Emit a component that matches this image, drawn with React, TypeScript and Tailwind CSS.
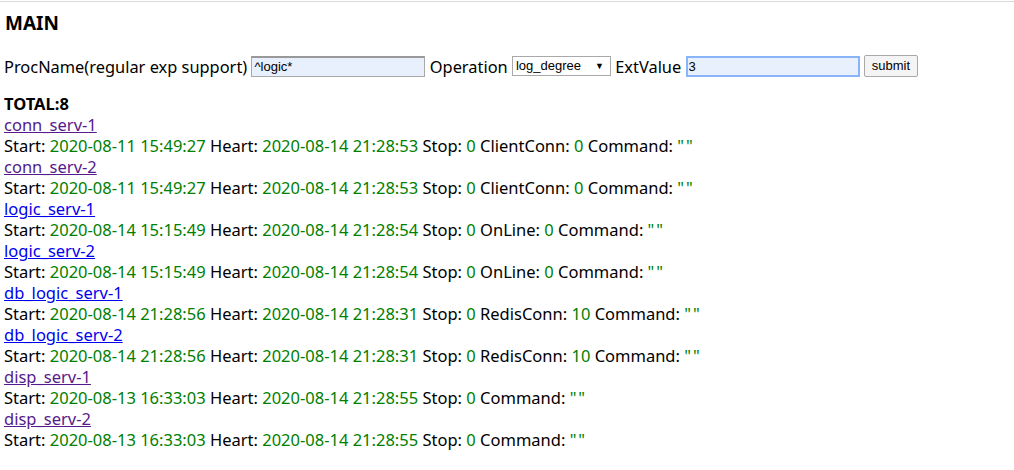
const G = "text-[#008000]";

interface Proc {
  name: string;
  visited: boolean;
  start: string;
  heart: string;
  stop: string;
  extra?: [string, string];
}

const procs: Proc[] = [
  { name: "conn_serv-1", visited: true, start: "2020-08-11 15:49:27", heart: "2020-08-14 21:28:53", stop: "0", extra: ["ClientConn", "0"] },
  { name: "conn_serv-2", visited: true, start: "2020-08-11 15:49:27", heart: "2020-08-14 21:28:53", stop: "0", extra: ["ClientConn", "0"] },
  { name: "logic_serv-1", visited: false, start: "2020-08-14 15:15:49", heart: "2020-08-14 21:28:54", stop: "0", extra: ["OnLine", "0"] },
  { name: "logic_serv-2", visited: false, start: "2020-08-14 15:15:49", heart: "2020-08-14 21:28:54", stop: "0", extra: ["OnLine", "0"] },
  { name: "db_logic_serv-1", visited: false, start: "2020-08-14 21:28:56", heart: "2020-08-14 21:28:31", stop: "0", extra: ["RedisConn", "10"] },
  { name: "db_logic_serv-2", visited: false, start: "2020-08-14 21:28:56", heart: "2020-08-14 21:28:31", stop: "0", extra: ["RedisConn", "10"] },
  { name: "disp_serv-1", visited: true, start: "2020-08-13 16:33:03", heart: "2020-08-14 21:28:55", stop: "0" },
  { name: "disp_serv-2", visited: true, start: "2020-08-13 16:33:03", heart: "2020-08-14 21:28:55", stop: "0" },
];

export default function App() {
  return (
    <div
      className="w-[1014px] h-[470px] bg-white text-black border-t border-[#d9d9d9] mt-px px-[4px] text-[16.5px] leading-[21px]"
      style={{ fontFamily: '"Noto Sans", "Open Sans", sans-serif' }}
    >
      <h1 className="text-[19px] font-bold leading-[24px] mt-[9px] ml-px">MAIN</h1>
      <form className="flex items-center h-[24px] mt-[19px] whitespace-pre text-[16.4px]" onSubmit={(e) => e.preventDefault()}>
        <span>ProcName(regular exp support) </span>
        <input
          defaultValue="^logic*"
          className="w-[174px] h-[21px] bg-[#e8f0fe] border border-[#a9a9a9] border-t-2 border-t-[#999] px-[2px] text-[13px] outline-none"
          style={{ fontFamily: '"Liberation Sans", Arial, sans-serif' }}
        />
        <span> Operation </span>
        <div
          className="relative w-[99px] h-[20px] border border-[#a9a9a9] bg-white text-[13px] leading-[18px] pl-[3px]"
          style={{ fontFamily: '"Liberation Sans", Arial, sans-serif' }}
        >
          log_degree
          <span className="absolute right-[6px] top-[0px] text-[9px]">▼</span>
        </div>
        <span> ExtValue </span>
        <input
          defaultValue="3"
          className="w-[174px] h-[21px] bg-[#e8f0fe] border-2 border-[#8ab4f8] px-px text-[13px] outline-none"
          style={{ fontFamily: '"Liberation Sans", Arial, sans-serif' }}
        />
        <span> </span>
        <button
          type="submit"
          className="h-[22px] px-[7px] border border-[#a9a9a9] rounded-[2px] bg-[#f4f4f4] text-[13px] leading-[18px]"
          style={{ fontFamily: '"Liberation Sans", Arial, sans-serif' }}
        >
          submit
        </button>
      </form>
      <div className="mt-[15px] font-bold">TOTAL:8</div>
      {procs.map((p) => (
        <div key={p.name}>
          <a href="#" className={`underline ${p.visited ? "text-[#551a8b]" : "text-[#0000ee]"}`}>
            {p.name}
          </a>
          <div className="whitespace-pre">
            Start: <span className={G}>{p.start}</span> Heart: <span className={G}>{p.heart}</span> Stop:{" "}
            <span className={G}>{p.stop}</span>
            {p.extra && (
              <>
                {" "}
                {p.extra[0]}: <span className={G}>{p.extra[1]}</span>
              </>
            )}{" "}
            Command: <span className={`${G} tracking-[2px]`}>""</span>
          </div>
        </div>
      ))}
    </div>
  );
}
